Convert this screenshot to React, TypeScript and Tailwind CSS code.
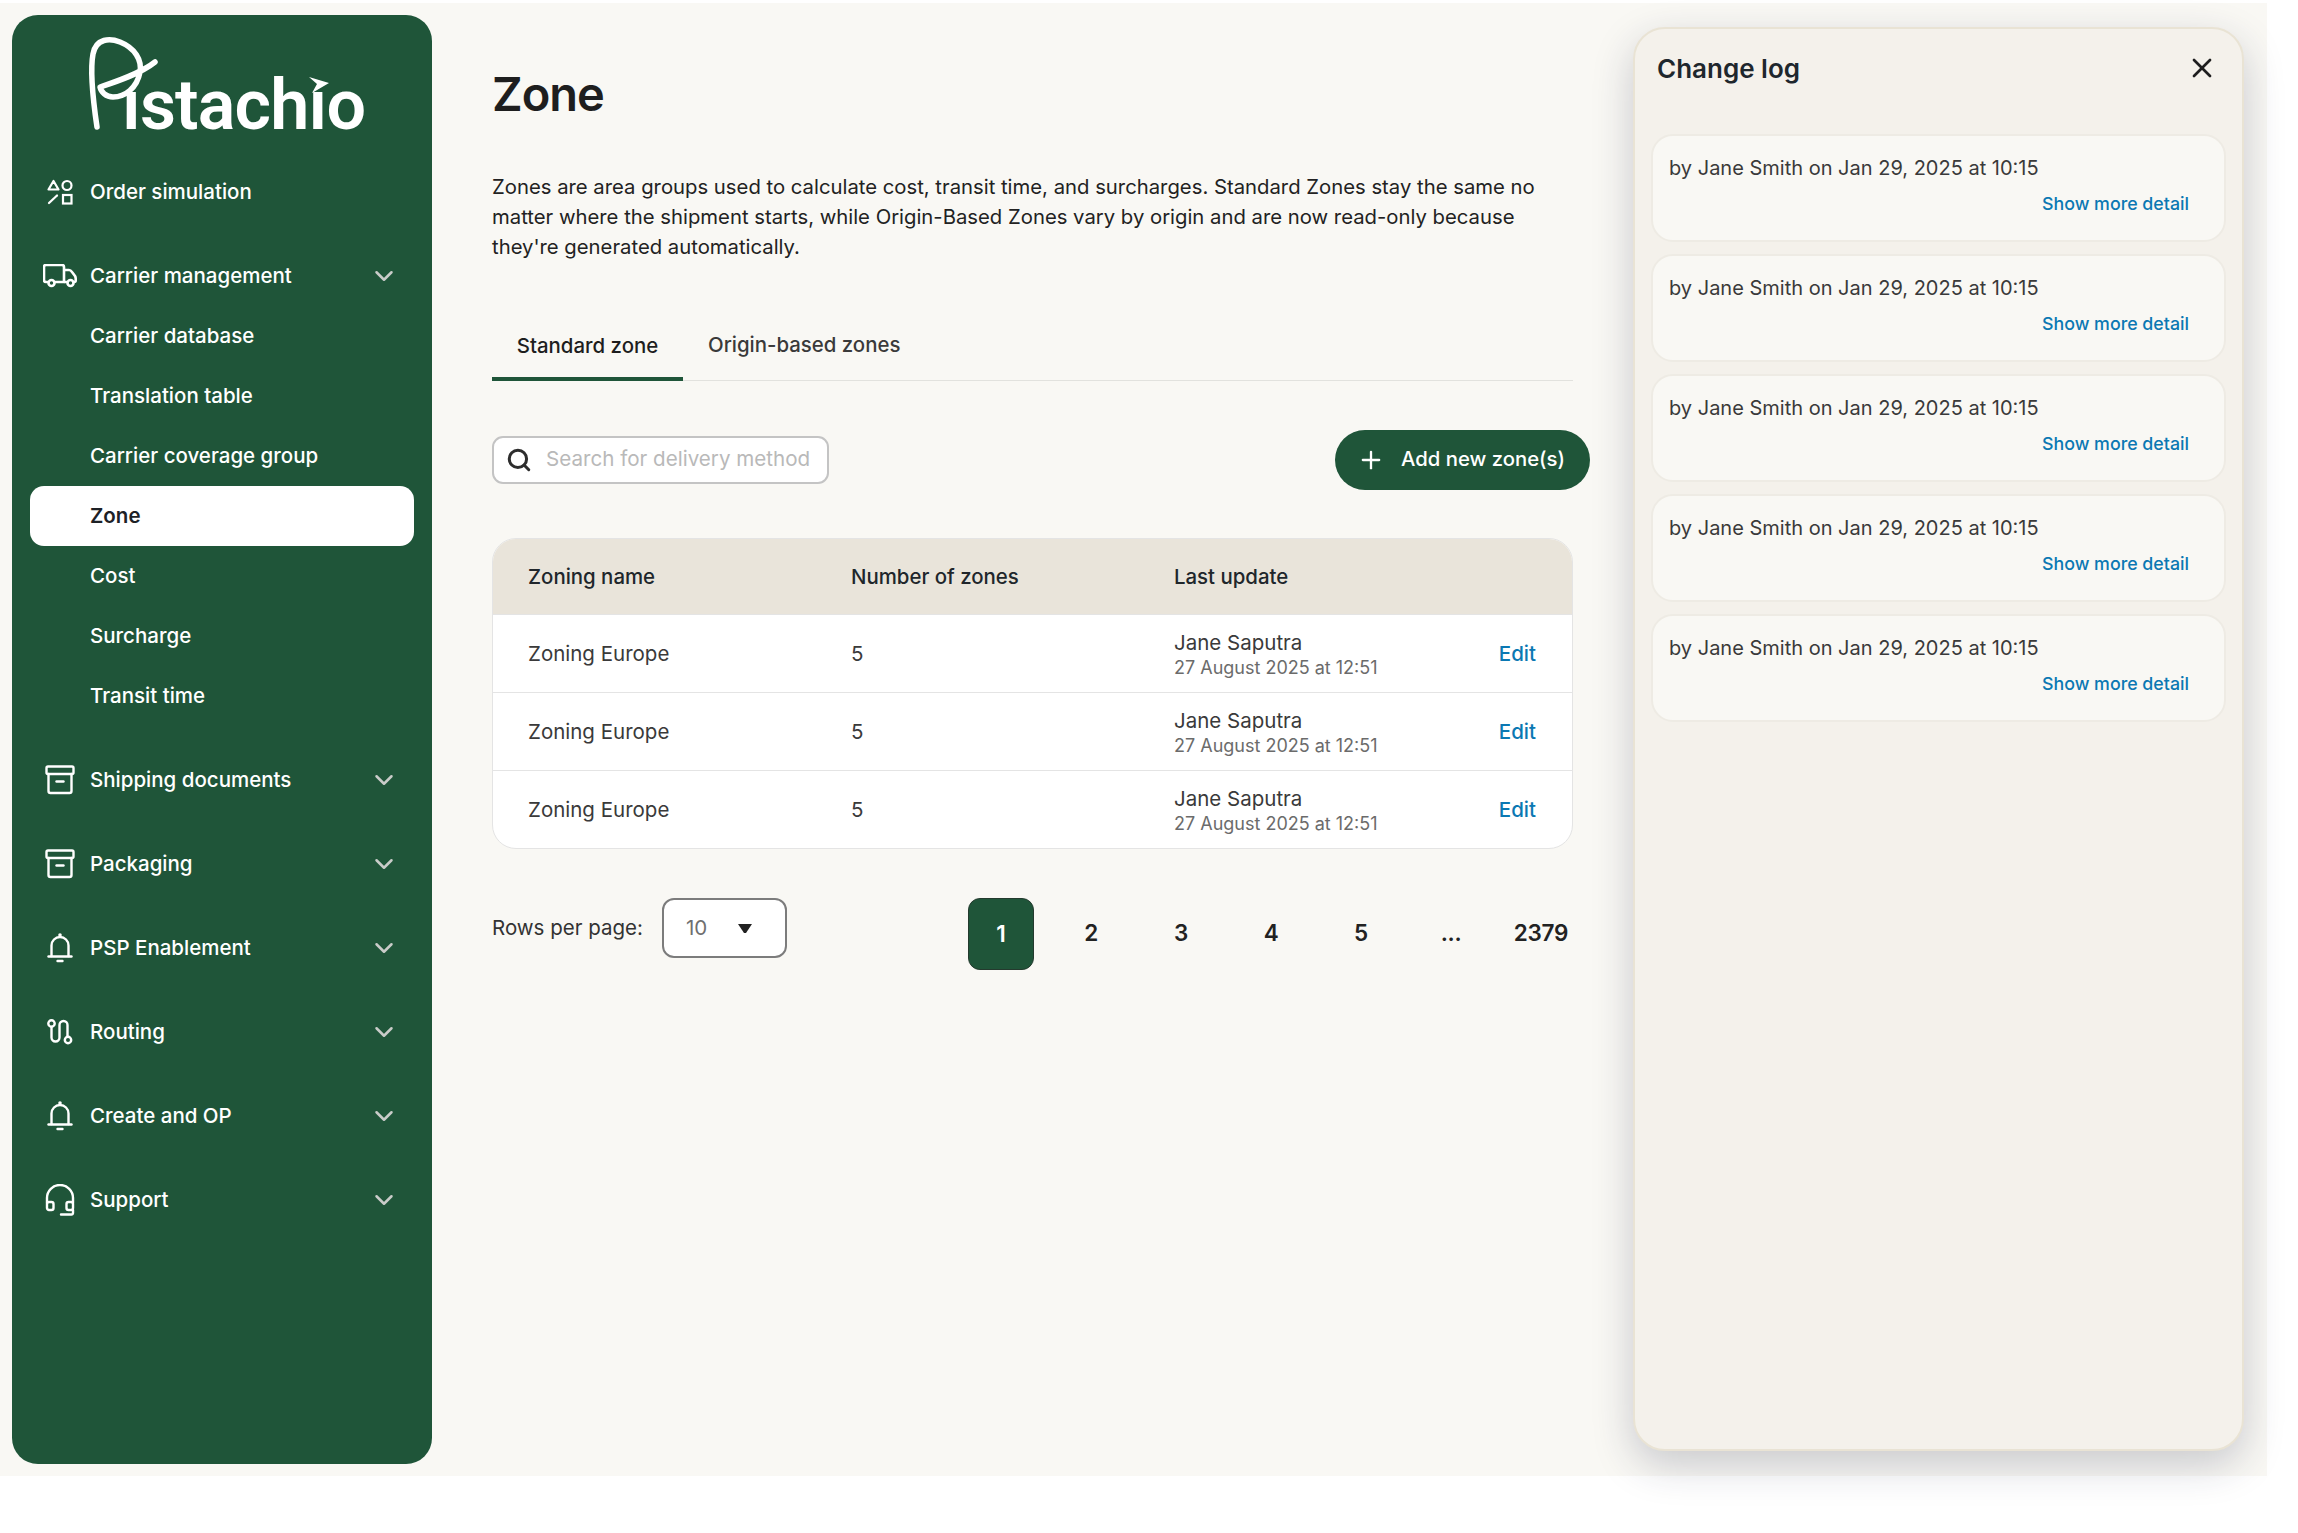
import { ChevronDown, Plus, Search, X } from "lucide-react"

const font = "font-['Inter','Liberation_Sans',sans-serif]"

function ShapesIcon() {
  return (
    <svg width="26" height="26" viewBox="0 0 26 26" fill="none" stroke="white" strokeWidth="2.2">
      <path d="M6.5 2 11.5 10.5H1.5z" strokeLinejoin="round" />
      <circle cx="20" cy="6.5" r="4.5" />
      <path d="M2 24 10 16.5" strokeLinecap="round" />
      <rect x="16" y="16" width="8.5" height="8.5" />
    </svg>
  )
}

function TruckIcon() {
  return (
    <svg width="34" height="24" viewBox="0 0 34 24" fill="none" stroke="white" strokeWidth="2.6" strokeLinejoin="round">
      <path d="M5 18H3a2 2 0 0 1-2-2V3a2 2 0 0 1 2-2h16a2 2 0 0 1 2 2v15h-9" />
      <path d="M21 6h5c1 0 2 .5 3 2l3 4c.6 1 .7 1.500 .7 2.500v2a1.500 1.500 0 0 1-1.500 1.500H31M24 18h-3" />
      <circle cx="8.500" cy="19" r="3" />
      <circle cx="27.500" cy="19" r="3" />
    </svg>
  )
}

function BoxIcon() {
  return (
    <svg width="30" height="30" viewBox="0 0 30 30" fill="none" stroke="white" strokeWidth="2.4" strokeLinecap="round" strokeLinejoin="round">
      <rect x="1.500" y="1.500" width="27" height="7.500" rx="1.500" />
      <path d="M3.500 9v17a2 2 0 0 0 2 2h19a2 2 0 0 0 2-2V9" />
      <path d="M11.500 16.500h7" />
    </svg>
  )
}

function BellIcon() {
  return (
    <svg width="26" height="32" viewBox="0 0 26 32" fill="none" stroke="white" strokeWidth="2.4" strokeLinecap="round">
      <circle cx="13" cy="3" r="1.800" fill="white" stroke="none" />
      <path d="M4.500 24V13.500a8.500 8.500 0 0 1 17 0V24" />
      <path d="M1.500 24.500h23" />
      <path d="M10.500 29h5" />
    </svg>
  )
}

function RouteIcon() {
  return (
    <svg width="26" height="26" viewBox="0 0 26 26" fill="none" stroke="white" strokeWidth="2.400" strokeLinecap="round">
      <circle cx="4.500" cy="4.500" r="3.200" />
      <path d="M4.500 8v10.500a4 4 0 0 0 8 0V6a4 4 0 0 1 8 0v11" />
      <circle cx="21" cy="21" r="3.200" />
    </svg>
  )
}

function HeadsetIcon() {
  return (
    <svg width="30" height="32" viewBox="0 0 30 32" fill="none" stroke="white" strokeWidth="2.400" strokeLinecap="round" strokeLinejoin="round">
      <path d="M2 19V14a13 13 0 0 1 26 0v5" />
      <rect x="2" y="18" width="6.500" height="8" rx="2" />
      <rect x="21.500" y="18" width="6.500" height="8" rx="2" />
      <path d="M28 26v3a1.500 1.500 0 0 1-1.500 1.500H16" />
    </svg>
  )
}

const groups = [
  { label: "Shipping documents", icon: <BoxIcon /> },
  { label: "Packaging", icon: <BoxIcon /> },
  { label: "PSP Enablement", icon: <BellIcon /> },
  { label: "Routing", icon: <RouteIcon /> },
  { label: "Create and OP", icon: <BellIcon /> },
  { label: "Support", icon: <HeadsetIcon /> },
]

const carrierItems = ["Carrier database", "Translation table", "Carrier coverage group", "Zone", "Cost", "Surcharge", "Transit time"]

function GroupRow({ label, icon, chevron = true }: { label: string; icon: React.ReactNode; chevron?: boolean }) {
  return (
    <div className="flex h-[84px] items-center pr-[33px] pl-[18px] text-white">
      <div className="flex w-[60px] justify-center">{icon}</div>
      <span className="flex-1 text-[20.5px] font-medium">{label}</span>
      {chevron && <ChevronDown size={30} strokeWidth={2} className="text-[#c9ccc9]" />}
    </div>
  )
}

function Logo() {
  return (
    <div className="relative h-[110px] w-[300px]">
      <svg className="absolute top-0 left-0" width="90" height="110" viewBox="0 0 90 110" fill="none" stroke="white" strokeWidth="5.500" strokeLinecap="round" strokeLinejoin="round">
        <path d="M17 97C13 70 10 40 13 24 16 8 30 8 40 12 55 18 62 30 60 42 57 58 45 67 33 67 26 67 21 62 20 57 35 52 60 44 75 32" />
      </svg>
      <span className="absolute top-[39px] left-[42px] font-['Roboto',sans-serif] text-[70px] leading-[72px] font-semibold tracking-[-0.8px] text-white">ıstachıo</span>
      <svg className="absolute top-[46px] left-[229px]" width="21" height="18" viewBox="0 0 21 18" fill="white">
        <path d="M0 1 20 7 3 17 8 8z" />
      </svg>
    </div>
  )
}

function Sidebar() {
  return (
    <aside className="mt-3 ml-3 flex h-[1449px] w-[420px] shrink-0 flex-col rounded-[26px] bg-[#1f5539]">
      <div className="pt-[15px] pl-[68px]">
        <Logo />
      </div>
      <div className="mt-[10px]">
        <GroupRow label="Order simulation" icon={<ShapesIcon />} chevron={false} />
      </div>
      <GroupRow label="Carrier management" icon={<TruckIcon />} />
      <div className="-mt-[12px] px-[18px]">
        {carrierItems.map((item) => (
          <div
            key={item}
            className={
              item === "Zone"
                ? "flex h-[60px] items-center rounded-[14px] bg-white pl-[60px] text-[20.5px] font-semibold text-[#1d2126]"
                : "flex h-[60px] items-center pl-[60px] text-[20.5px] font-medium text-white"
            }
          >
            {item}
          </div>
        ))}
      </div>
      <div className="mt-[12px]">
        {groups.map((g) => (
          <GroupRow key={g.label} label={g.label} icon={g.icon} />
        ))}
      </div>
    </aside>
  )
}

function ZoneRow() {
  return (
    <div className="flex h-[78px] items-center border-t border-[#e4e4e4] pt-[2px] pr-[36px] pl-[35px] text-[20.5px] text-[#3a3a3a]">
      <div className="w-[323px]">Zoning Europe</div>
      <div className="w-[323px]">5</div>
      <div className="flex-1">
        <div className="leading-[26px]">Jane Saputra</div>
        <div className="mt-[1px] text-[18px] leading-[22px] text-[#6b6b6b]">27 August 2025 at 12:51</div>
      </div>
      <div className="font-medium text-[#0b78b3]">Edit</div>
    </div>
  )
}

function Main() {
  return (
    <main className="ml-[60px] w-[1098px] shrink-0">
      <h1 className="mt-[57px] text-[47px] leading-[68px] font-semibold tracking-[-1px] text-[#1e1e1e]">Zone</h1>
      <p className="mt-[44px] w-[1066px] text-[20.3px] leading-[30px] text-[#222]">
        Zones are area groups used to calculate cost, transit time, and surcharges. Standard Zones stay the same no matter where the shipment starts, while Origin-Based Zones vary by origin and are now read-only because they're generated automatically.
      </p>
      <div className="mt-[49px] flex h-[70px] w-[1081px] items-stretch border-b border-[#e2e2de] text-[20.4px] font-medium">
        <div className="-mb-px flex w-[191px] items-center justify-center border-y-4 border-t-transparent border-b-[#1f5539] text-[#1e1e1e]">Standard zone</div>
        <div className="ml-[25px] flex items-center text-[#3a3a3a]">Origin-based zones</div>
      </div>
      <div className="mt-[49px] flex h-[59px] items-center justify-between">
        <div className="flex h-[48px] w-[337px] items-center rounded-[11px] border-2 border-[#c4c4c4] bg-white pl-[12px]">
          <Search size={26} strokeWidth={2.8} className="text-[#2d2d2d]" />
          <span className="ml-[14px] text-[20.6px] text-[#b9b9b9]">Search for delivery method</span>
        </div>
        <div className="flex h-[60px] w-[255px] items-center rounded-full bg-[#1f5539] pl-[22px] text-[20.3px] font-medium text-white">
          <Plus size={28} strokeWidth={2} />
          <span className="ml-[16px]">Add new zone(s)</span>
        </div>
      </div>
      <div className="mt-[49px] w-[1081px] overflow-hidden rounded-[24px] border border-[#e4e4e4] bg-white">
        <div className="flex h-[75px] items-center bg-[#e9e4da] pt-[1px] pl-[35px] text-[20.4px] font-medium text-[#20262b]">
          <div className="w-[323px]">Zoning name</div>
          <div className="w-[323px]">Number of zones</div>
          <div>Last update</div>
        </div>
        <ZoneRow />
        <ZoneRow />
        <ZoneRow />
      </div>
      <div className="mt-[49px] flex items-start">
        <span className="mt-[15px] w-[170px] shrink-0 text-[20.5px] text-[#333]">Rows per page:</span>
        <div className="flex h-[60px] w-[125px] shrink-0 items-center rounded-[12px] border-2 border-[#7c7c7c] bg-white pl-[22px]">
          <span className="text-[20.5px] text-[#6f6f6f]">10</span>
          <svg className="ml-[30px]" width="16" height="11" viewBox="0 0 16 11" fill="#222">
            <path d="M1 1h14L9 10H7z" />
          </svg>
        </div>
        <div className="ml-[181px] flex h-[72px] w-[66px] shrink-0 items-center justify-center rounded-[12px] border border-[#243a2e] bg-[#1f5539] text-[22.5px] font-semibold text-white">1</div>
        <div className="ml-[12px] flex pt-[17px] text-[22.5px] leading-[36px] font-semibold tracking-[-0.3px] text-[#222]">
          {["2", "3", "4", "5", "...", "2379"].map((p) => (
            <span key={p} className="w-[90px] shrink-0 text-center">{p}</span>
          ))}
        </div>
      </div>
    </main>
  )
}

function ChangeLog() {
  return (
    <section className="mt-6 ml-[43px] flex h-[1424px] w-[611px] shrink-0 flex-col rounded-[32px] border-2 border-[#e9e3d4] bg-[#f4f1eb] px-[16px] shadow-[0_14px_40px_rgba(30,35,70,0.22)]">
      <div className="flex h-[78px] items-center justify-between pr-[8px] pl-[6px]">
        <h2 className="text-[26px] font-semibold text-[#1e272d]">Change log</h2>
        <X size={32} strokeWidth={2} className="text-[#1e1e1e]" />
      </div>
      <div className="mt-[27px] flex flex-col gap-[12px]">
        {[0, 1, 2, 3, 4].map((i) => (
          <div key={i} className="h-[108px] rounded-[22px] border-2 border-[#eeebe4] bg-[#f9f8f4] pt-[17px] pr-[35px] pl-[16px]">
            <div className="text-[20px] leading-[30px] text-[#3a3a3a]">by Jane Smith on Jan 29, 2025 at 10:15</div>
            <div className="mt-[9px] text-right text-[17.8px] leading-[24px] font-medium text-[#0b78b3]">Show more detail</div>
          </div>
        ))}
      </div>
    </section>
  )
}

export default function App() {
  return (
    <div className={`h-[1533px] w-[2298px] overflow-hidden bg-white pt-[3px] ${font}`}>
      <div className="flex h-[1473px] w-[2267px] bg-[#f9f8f4]">
        <Sidebar />
        <Main />
        <ChangeLog />
      </div>
    </div>
  )
}
